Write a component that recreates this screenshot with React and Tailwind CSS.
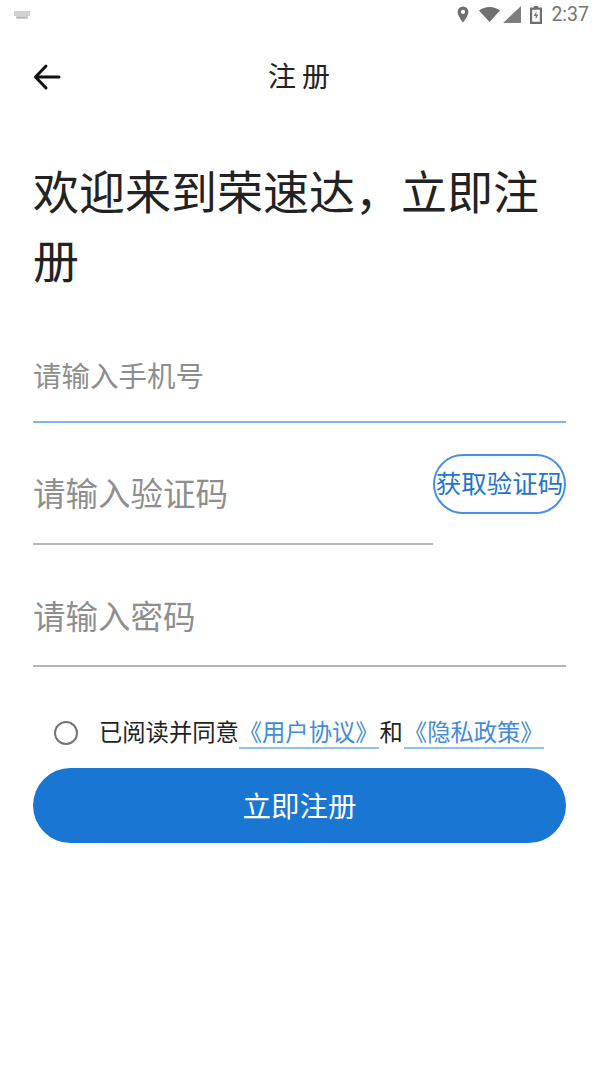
import { useState } from 'react';

function StatusBar() {
  return (
    <div className="h-[29px] flex items-center justify-between pl-[13px] pr-[11px]">
      <svg width="18" height="10" viewBox="0 0 18 10" className="opacity-70">
        <path d="M1 1h16v5h-2v3H3V6H1z" fill="#bdbdbd" />
        <path d="M4 7h10v1H4z" fill="#8f8f8f" />
      </svg>
      <div className="flex items-center">
        <svg width="12" height="17" viewBox="0 0 12 17">
          <path fillRule="evenodd" d="M6 0.500a5.400 5.400 0 0 1 5.400 5.400C11.400 9.800 6 16.500 6 16.500S0.600 9.800 0.600 5.900A5.400 5.400 0 0 1 6 0.500zM6 3.800a2.100 2.100 0 1 0 0 4.200a2.100 2.100 0 0 0 0-4.200z" fill="#6f6f6f" />
        </svg>
        <svg width="21" height="15" viewBox="0 0 21 15" className="ml-[10px]">
          <path d="M0 3.500C2.900 1.200 6.500 0 10.500 0s7.600 1.200 10.500 3.500L10.500 15z" fill="#6f6f6f" />
        </svg>
        <svg width="18" height="17" viewBox="0 0 18 17" className="ml-[3px]">
          <path d="M18 0v17H0z" fill="#7d7d7d" />
        </svg>
        <svg width="12" height="18" viewBox="0 0 12 18" className="ml-[9px]">
          <path fillRule="evenodd" d="M3.800 0h4.400v1.500H12V18H0V1.500h3.800zM2.200 3.700V15.800h7.600V3.700zM6.700 5L3.800 10h1.900v3.500l2.500-5H6.200z" fill="#6f6f6f" />
        </svg>
        <span className="ml-[9px] text-[19.5px] leading-none text-[#757575] font-['Roboto',sans-serif]">2:37</span>
      </div>
    </div>
  );
}

function Field({ placeholder, className, inputClass, value, onChange }) {
  return (
    <div className={className}>
      <input
        placeholder={placeholder}
        value={value}
        onChange={onChange}
        className={inputClass}
      />
    </div>
  );
}

export default function App() {
  const [phone, setPhone] = useState('');
  const [code, setCode] = useState('');
  const [password, setPassword] = useState('');
  const [agreed, setAgreed] = useState(false);

  return (
    <div className="w-[600px] h-[1068px] bg-white overflow-hidden font-['Roboto','Noto_Sans_CJK_SC',sans-serif]">
      <StatusBar />

      {/* header */}
      <div className="relative h-[98px] flex items-center justify-center">
        <button className="absolute left-[32px] top-[33px] w-[30px] h-[30px]">
          <svg width="30" height="30" viewBox="0 0 30 30" fill="none" stroke="#111" strokeWidth="3" strokeLinecap="round" strokeLinejoin="round">
            <path d="M27 15H4M14 4L3.500 15L14 26" />
          </svg>
        </button>
        <h1 className="text-[28px] font-normal text-[#222] tracking-[6px] pl-[4px]">注册</h1>
      </div>

      <div className="pl-[33px] pr-[34px]">
        <h2 className="mt-[32px] text-[46px] leading-[69px] text-[#222] font-normal">欢迎来到荣速达，立即注册</h2>

        <Field
          placeholder="请输入手机号"
          value={phone}
          onChange={(e) => setPhone(e.target.value)}
          className="mt-[38px] border-b-2 border-[#7fb6ea] h-[88px] flex items-center"
          inputClass="w-full outline-none text-[28.500px] text-[#222] placeholder:text-[#8e8e8e]"
        />

        <div className="flex items-start">
          <Field
            placeholder="请输入验证码"
            value={code}
            onChange={(e) => setCode(e.target.value)}
            className="w-[400px] h-[122px] pt-[24px] border-b-2 border-[#b5b5b5] flex items-center"
            inputClass="w-full outline-none text-[32.500px] text-[#222] placeholder:text-[#8e8e8e]"
          />
          <button className="mt-[31px] w-[133px] h-[60px] pt-[2px] border-2 border-[#4a90e2] rounded-full text-[25.500px] leading-none text-[#1f74d2] whitespace-nowrap flex items-center justify-center">
            获取验证码
          </button>
        </div>

        <Field
          placeholder="请输入密码"
          value={password}
          onChange={(e) => setPassword(e.target.value)}
          className="h-[122px] pt-[26px] border-b-2 border-[#b5b5b5] flex items-center"
          inputClass="w-full outline-none text-[32.500px] text-[#222] placeholder:text-[#8e8e8e]"
        />

        <div className="mt-[50px] h-[32px] flex items-center pl-[21px]">
          <button
            onClick={() => setAgreed(!agreed)}
            className={`w-[24px] h-[24px] rounded-full border-2 border-[#757575] ${agreed ? 'bg-[#1976d2]' : 'bg-white'}`}
          />
          <p className="ml-[21px] text-[23.300px] leading-[32px] text-[#222] whitespace-nowrap">
            已阅读并同意
            <a className="text-[#3f8bd8] border-b-2 border-[#8fc0ee]">《用户协议》</a>
            <span className="mx-[1px]">和</span>
            <a className="text-[#3f8bd8] border-b-2 border-[#8fc0ee]">《隐私政策》</a>
          </p>
        </div>

        <button className="mt-[19px] w-full h-[75px] pt-[6px] rounded-full bg-[#1976d2] text-white text-[28.500px]">
          立即注册
        </button>
      </div>
    </div>
  );
}
